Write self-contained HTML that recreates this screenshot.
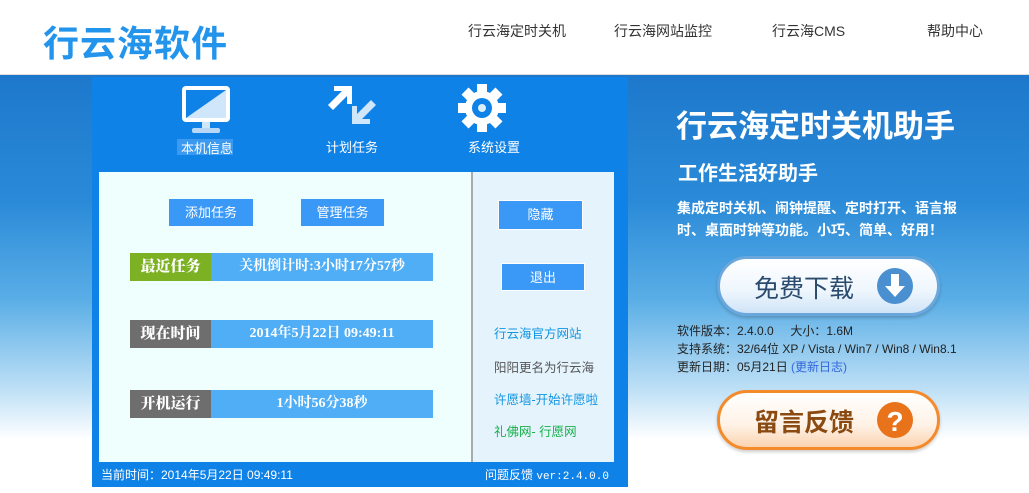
<!DOCTYPE html>
<html><head><meta charset="utf-8"><style>
*{margin:0;padding:0;box-sizing:border-box}
body{width:1029px;height:493px;overflow:hidden;font-family:"Liberation Sans","Noto Sans CJK SC",sans-serif;background:linear-gradient(#1d78cc 75px,#2a8ad8 200px,#5aaee6 300px,#bfe0f6 390px,#ffffff 440px);position:relative}
.hdr{position:absolute;left:0;top:0;width:1029px;height:75px;background:#fff;border-bottom:1px solid #ddd}
.logo{position:absolute;left:43px;top:15px;font-size:36px;font-weight:bold;color:#2394ec;letter-spacing:1px}
.nav{position:absolute;top:21px;font-size:14px;color:#333}
.abs{position:absolute}
.panel{position:absolute;left:92px;top:77px;width:536px;height:410px;background:#0f82e8}
.lbl{position:absolute;color:#fff;font-size:13px}
.main{position:absolute;left:99px;top:172px;width:372px;height:290px;background:#eefffe}
.side{position:absolute;left:471px;top:172px;width:143px;height:290px;background:#e5f3fd;border-left:2px solid #aaa}
.btn{position:absolute;background:#3a98f6;color:#fff;font-size:13px;text-align:center}
.row{position:absolute;left:130px;width:303px;height:28px;background:#4faef6;color:#fff;font-weight:bold;font-family:"Liberation Serif","Noto Serif CJK SC",serif;font-size:14px;line-height:28px}
.row b{display:inline-block;width:81px;text-align:center;font-size:15px}
.row span{position:absolute;left:81px;right:0;text-align:center}
.lk{position:absolute;left:494px;font-size:12.5px}
.foot{position:absolute;top:466px;font-size:12px;color:#fff}
.pill{position:absolute;left:717px;width:223px;height:60px;border-radius:30px}
</style></head><body>
<div class="hdr"><div class="logo">行云海软件</div>
<div class="nav" style="left:468px">行云海定时关机</div>
<div class="nav" style="left:614px">行云海网站监控</div>
<div class="nav" style="left:772px">行云海CMS</div>
<div class="nav" style="left:927px">帮助中心</div></div>

<div class="panel"></div>
<svg class="abs" style="left:180px;top:85px" width="52" height="50" viewBox="0 0 52 50"><rect x="2" y="1" width="48" height="36" rx="4" fill="#fff"/><rect x="6" y="5" width="40" height="28" fill="#0f82e8"/><polygon points="6,33 46,5 46,33" fill="#cfe6fb"/><rect x="22" y="37" width="8" height="6" fill="#cfe6fb"/><rect x="12" y="43" width="28" height="5" rx="2" fill="#b8d8f6"/></svg>
<div class="abs" style="left:177px;top:139px;width:56px;height:16px;background:#3b9af0"></div>
<div class="lbl" style="left:181px;top:138px">本机信息</div>
<svg class="abs" style="left:326px;top:85px" width="54" height="50" viewBox="0 0 54 50"><polygon points="2,20 16,6 8,6 8,1 26,1 26,19 21,19 21,11 7,25" fill="#fff"/><polygon points="50,20 36,34 44,34 44,39 26,39 26,21 31,21 31,29 45,15" fill="#cfe6fb"/></svg>
<div class="lbl" style="left:326px;top:137px">计划任务</div>
<svg class="abs" style="left:458px;top:84px" width="48" height="48" viewBox="0 0 48 48"><g fill="#fff"><circle cx="24" cy="24" r="17"/><rect x="19" y="0" width="10" height="48"/><rect x="0" y="19" width="48" height="10"/><rect x="19" y="0" width="10" height="48" transform="rotate(45 24 24)"/><rect x="19" y="0" width="10" height="48" transform="rotate(-45 24 24)"/></g><circle cx="24" cy="24" r="10" fill="#0f82e8"/><circle cx="24" cy="24" r="4" fill="#dbeefc"/></svg>
<div class="lbl" style="left:468px;top:137px">系统设置</div>

<div class="main"></div><div class="side"></div>
<div class="btn" style="left:169px;top:199px;width:84px;height:27px;line-height:27px">添加任务</div>
<div class="btn" style="left:301px;top:199px;width:83px;height:27px;line-height:27px">管理任务</div>
<div class="btn" style="left:498px;top:200px;width:85px;height:30px;line-height:28px;border:1px solid #fff">隐藏</div>
<div class="btn" style="left:501px;top:263px;width:84px;height:28px;line-height:27px;border:1px solid #fff">退出</div>
<div class="row" style="top:253px"><b style="background:#7cb123">最近任务</b><span>关机倒计时:3小时17分57秒</span></div>
<div class="row" style="top:320px"><b style="background:#6e6e6e">现在时间</b><span>2014年5月22日 09:49:11</span></div>
<div class="row" style="top:390px"><b style="background:#6e6e6e">开机运行</b><span>1小时56分38秒</span></div>
<div class="lk" style="top:323px;color:#1296e0">行云海官方网站</div>
<div class="lk" style="top:357px;color:#555">阳阳更名为行云海</div>
<div class="lk" style="top:389px;color:#1296e0">许愿墙-开始许愿啦</div>
<div class="lk" style="top:421px;color:#17b04a">礼佛网- 行愿网</div>
<div class="foot" style="left:101px">当前时间：2014年5月22日 09:49:11</div>
<div class="foot" style="left:485px">问题反馈 <span style="font-family:'Liberation Mono',monospace;font-size:11px">ver:2.4.0.0</span></div>

<div class="abs" style="left:676px;top:101px;font-size:31px;font-weight:bold;color:#fff">行云海定时关机助手</div>
<div class="abs" style="left:678px;top:157px;font-size:20px;font-weight:bold;color:#fff">工作生活好助手</div>
<div class="abs" style="left:677px;top:197px;font-size:14px;font-weight:bold;color:#fff;line-height:22px;width:300px">集成定时关机、闹钟提醒、定时打开、语言报<br>时、桌面时钟等功能。小巧、简单、好用！</div>
<div class="pill" style="top:256px;background:linear-gradient(#ffffff,#eef6fd 60%,#cfe4f7);border:3px solid #6aa7dc;box-shadow:0 2px 3px rgba(0,0,0,.2)"><div class="abs" style="left:34px;top:10px;font-size:25px;color:#2a4b6e">免费下载</div><svg class="abs" style="left:156px;top:8px" width="38" height="38" viewBox="0 0 38 38"><circle cx="19" cy="19" r="18" fill="#4a8fd0"/><path d="M15 7h8v12h6l-10 11-10-11h6z" fill="#fff"/></svg></div>
<div class="abs" style="left:677px;top:322px;font-size:12px;color:#222;line-height:18px">软件版本：2.4.0.0 &nbsp;&nbsp;&nbsp; 大小：1.6M<br>支持系统：32/64位 XP / Vista / Win7 / Win8 / Win8.1<br>更新日期：05月21日 <span style="color:#3366dd">(更新日志)</span></div>
<div class="pill" style="top:390px;background:linear-gradient(#ffffff,#fff2e6 60%,#fbd3b0);border:3px solid #f58a2a;box-shadow:0 2px 3px rgba(0,0,0,.2)"><div class="abs" style="left:34px;top:10px;font-size:25px;font-weight:bold;color:#8a4a12">留言反馈</div><svg class="abs" style="left:156px;top:8px" width="38" height="38" viewBox="0 0 38 38"><circle cx="19" cy="19" r="18" fill="#e8731a"/><text x="19" y="30" text-anchor="middle" font-size="28" font-weight="bold" fill="#fff" font-family="Liberation Sans">?</text></svg></div>
</body></html>
